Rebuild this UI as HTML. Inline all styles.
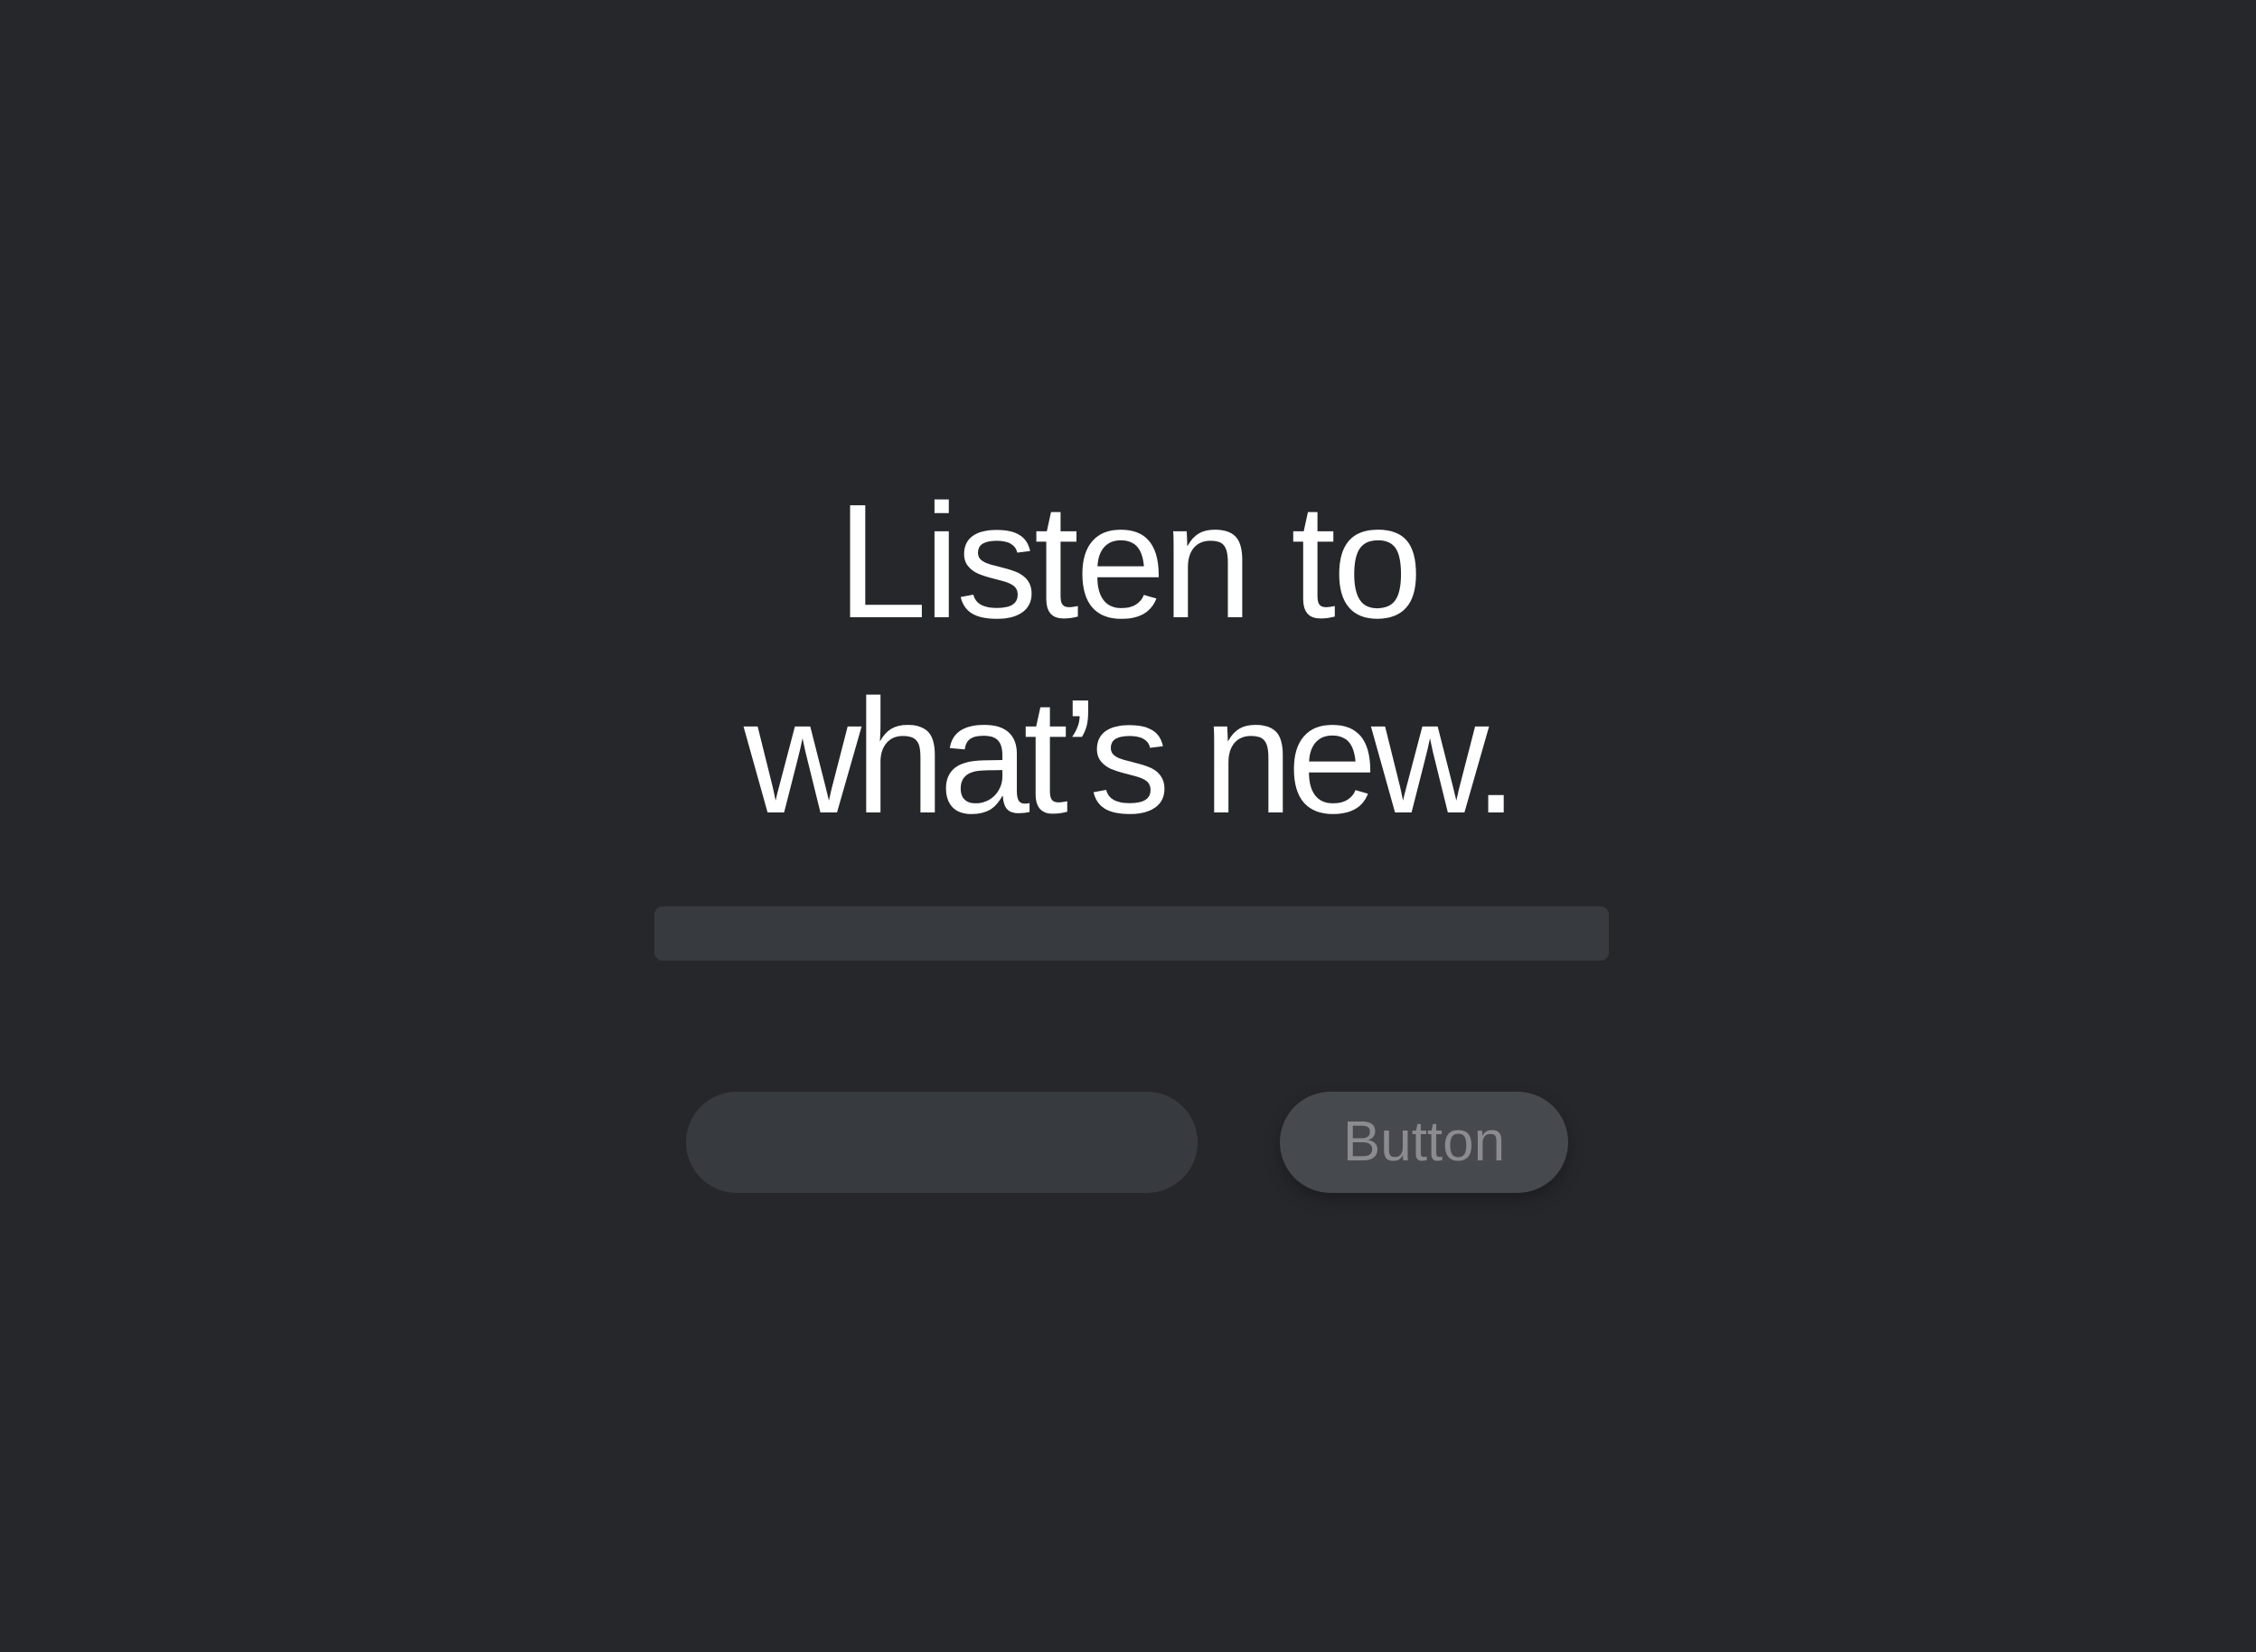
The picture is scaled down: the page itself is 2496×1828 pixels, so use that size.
<!DOCTYPE html>
<html><head><meta charset="utf-8"><style>
html,body{margin:0;padding:0;}
body{width:2496px;height:1828px;background:#25272b;position:relative;overflow:hidden;font-family:"Liberation Sans",sans-serif;}
.h{position:absolute;left:0;width:2496px;text-align:center;color:#fff;font-size:180px;line-height:216px;letter-spacing:-4px;top:514px;}
.h .l2{letter-spacing:-7px;}
.bar{position:absolute;left:724px;top:1003px;width:1056px;height:60px;border-radius:9px;background:#373a3e;}
.pill{position:absolute;left:759px;top:1208px;width:566px;height:112px;border-radius:56px;background:#373a3e;}
.btn{position:absolute;left:1416px;top:1208px;width:319px;height:112px;border-radius:56px;background:#46494d;box-shadow:0 8px 18px rgba(0,0,0,0.25);color:#8a8c8f;font-size:62px;line-height:112px;text-align:center;}
</style></head><body>
<div class="h">Listen to<br><span class="l2">what’s new.</span></div>
<div class="bar"></div>
<div class="pill"></div>
<div class="btn">Button</div>
</body></html>
